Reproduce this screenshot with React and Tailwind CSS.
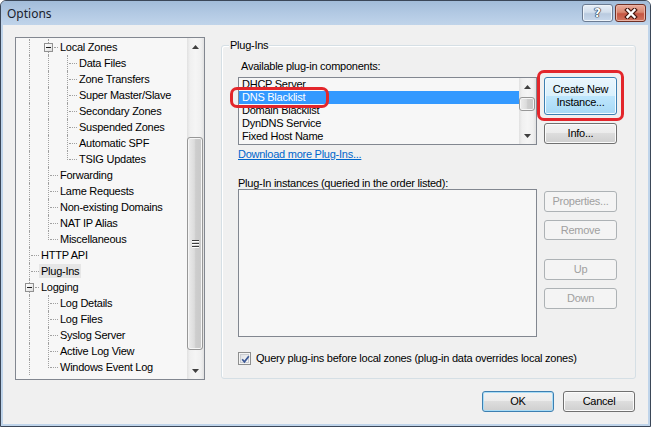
import React from 'react';
import clsx from 'clsx';

const treeRows = [
  { label: 'Local Zones', guides: ['v', 'box'] },
  { label: 'Data Files', guides: ['v', 'v', 'tee'] },
  { label: 'Zone Transfers', guides: ['v', 'v', 'tee'] },
  { label: 'Super Master/Slave', guides: ['v', 'v', 'tee'] },
  { label: 'Secondary Zones', guides: ['v', 'v', 'tee'] },
  { label: 'Suspended Zones', guides: ['v', 'v', 'tee'] },
  { label: 'Automatic SPF', guides: ['v', 'v', 'tee'] },
  { label: 'TSIG Updates', guides: ['v', 'v', 'end'] },
  { label: 'Forwarding', guides: ['v', 'tee'] },
  { label: 'Lame Requests', guides: ['v', 'tee'] },
  { label: 'Non-existing Domains', guides: ['v', 'tee'] },
  { label: 'NAT IP Alias', guides: ['v', 'tee'] },
  { label: 'Miscellaneous', guides: ['v', 'end'] },
  { label: 'HTTP API', guides: ['tee'] },
  { label: 'Plug-Ins', guides: ['tee'], selected: true },
  { label: 'Logging', guides: ['box'] },
  { label: 'Log Details', guides: ['v', 'tee'] },
  { label: 'Log Files', guides: ['v', 'tee'] },
  { label: 'Syslog Server', guides: ['v', 'tee'] },
  { label: 'Active Log View', guides: ['v', 'tee'] },
  { label: 'Windows Event Log', guides: ['v', 'end'] },
];

const plugins = ['DHCP Server', 'DNS Blacklist', 'Domain Blacklist', 'DynDNS Service', 'Fixed Host Name'];

const dot = 'absolute border-dotted border-[#a0a0a0]';

function Guide({ type }) {
  return (
    <div className="relative w-[19px] h-[16px] shrink-0">
      {(type === 'v' || type === 'tee' || type === 'box') && (
        <div className={clsx(dot, 'left-[10px] top-0 h-[16px] border-l')} />
      )}
      {type === 'end' && <div className={clsx(dot, 'left-[10px] top-0 h-[9px] border-l')} />}
      {(type === 'tee' || type === 'end') && (
        <div className={clsx(dot, 'left-[12px] top-[8px] w-[8px] border-t')} />
      )}
      {type === 'box' && (
        <>
          <div className={clsx(dot, 'left-[16px] top-[8px] w-[4px] border-t')} />
          <div className="absolute left-[6px] top-[4px] w-[9px] h-[9px] border border-[#919191] bg-[linear-gradient(135deg,#ffffff,#dedede)] flex items-center justify-center">
            <div className="w-[5px] h-px bg-[#1b1b1b]" />
          </div>
        </>
      )}
    </div>
  );
}

function Arrow({ down }) {
  return (
    <svg width="7" height="4" viewBox="0 0 7 4" className={down ? 'rotate-180' : ''}>
      <polygon points="0,4 3.5,0 7,4" fill="#3f3f3f" />
    </svg>
  );
}

function ScrollBar({ thumbClass, grip }) {
  return (
    <div className="w-[17px] h-full shrink-0 flex flex-col bg-[linear-gradient(to_right,#e1e1e1,#f0f0f0_18%,#f5f5f5_50%,#f0f0f0_82%,#e1e1e1)]">
      <div className="h-[17px] shrink-0 flex items-center justify-center">
        <Arrow />
      </div>
      <div className="flex-1 flex flex-col">
        <div
          className={clsx(
            'mr-[1px] rounded-[3px] border border-[#979797] shadow-[inset_0_0_0_1px_#f6f6f6] bg-[linear-gradient(to_right,#ececec,#dcdcdc_45%,#cdcdcd_55%,#c9c9c9)] flex items-center justify-center',
            thumbClass
          )}
        >
          {grip && (
            <div className="flex flex-col gap-[2px]">
              <div className="w-[7px] h-px bg-[#3d3d3d] shadow-[0_1px_0_#ffffff]" />
              <div className="w-[7px] h-px bg-[#3d3d3d] shadow-[0_1px_0_#ffffff]" />
              <div className="w-[7px] h-px bg-[#3d3d3d] shadow-[0_1px_0_#ffffff]" />
            </div>
          )}
        </div>
      </div>
      <div className="h-[17px] shrink-0 flex items-center justify-center">
        <Arrow down />
      </div>
    </div>
  );
}

const buttonStyles = {
  normal:
    'border-[#707070] bg-[linear-gradient(to_bottom,#f2f2f2,#ebebeb_50%,#dddddd_50%,#cfcfcf)] shadow-[inset_0_0_0_1px_#fbfbfb]',
  hot: 'border-[#3c7fb1] bg-[linear-gradient(to_bottom,#eaf6fd,#d9f0fc_50%,#bee6fd_50%,#a7d9f5)] shadow-[inset_0_0_0_1px_#f3fbff]',
  default:
    'border-[#3c7fb1] bg-[linear-gradient(to_bottom,#f2f2f2,#ebebeb_50%,#dddddd_50%,#cfcfcf)] shadow-[inset_0_0_0_1px_#a9dcf6]',
  disabled: 'border-[#adb2b5] bg-[#f4f4f4] text-[#a0a0a0]',
};

function Button({ children, variant = 'normal', className }) {
  return (
    <button
      type="button"
      className={clsx(
        'flex items-center justify-center border rounded-[3px] text-center',
        buttonStyles[variant],
        className
      )}
    >
      <span className="block">{children}</span>
    </button>
  );
}

function Tree() {
  return (
    <div className="w-[190px] h-[343px] shrink-0 border border-[#828790] bg-[#f7f7f7] flex">
      <div className="flex-1 pl-[3px] pt-[1px] overflow-hidden">
        {treeRows.map((row) => (
          <div key={row.label} className="flex h-[16px] items-start">
            {row.guides.map((g, i) => (
              <Guide key={i} type={g} />
            ))}
            <span
              className={clsx(
                'ml-[1px] px-[2px] whitespace-nowrap',
                row.selected ? 'mt-[1px] h-[14px] leading-[14px] bg-[#e6e6e6]' : 'h-[16px] leading-[16px]'
              )}
            >
              {row.label}
            </span>
          </div>
        ))}
      </div>
      <ScrollBar thumbClass="mt-[82px] h-[213px]" grip />
    </div>
  );
}

function Checkbox() {
  return (
    <div className="w-[13px] h-[13px] shrink-0 border border-[#8e8f8f] bg-[#f4f4f4] p-px">
      <div className="w-full h-full border border-[#c9ccd1] bg-[linear-gradient(135deg,#dfe1e4,#f7f7f7)]">
        <svg width="9" height="9" viewBox="0 0 9 9" className="block">
          <path d="M1.2 4.3 L3.4 6.8 L7.8 1.2" fill="none" stroke="#3a5796" strokeWidth="1.7" />
        </svg>
      </div>
    </div>
  );
}

export default function App() {
  return (
    <div className="w-[651px] h-[427px] font-['Liberation_Sans',Arial,sans-serif] text-[11px] tracking-[-0.25px] text-black">
      <div className="w-[651px] h-[427px] flex flex-col border border-[#3b4758] rounded-t-[6px] overflow-hidden bg-[#bfd4ea]">
        {/* Title bar */}
        <div className="h-[24px] shrink-0 flex items-start pl-[6px] pr-[4px] pt-[3px] bg-[linear-gradient(to_bottom,#a2bcd9,#b2c9e3_50%,#c0d4ea)]">
          <span className="mt-[2px] font-['Noto_Sans',sans-serif] text-[12px] leading-[16px] tracking-normal text-[#1a222d]">
            Options
          </span>
          <div className="ml-auto flex gap-[2px]">
            <div className="w-[31px] h-[18px] rounded-[3px] border border-[#6b7b92] bg-[linear-gradient(to_bottom,#e8eff8,#d2deec_45%,#b9cadf_55%,#c9d9ec)] shadow-[inset_0_0_0_1px_#eef4fa] flex items-center justify-center">
              <span className="font-['DejaVu_Sans',sans-serif] font-bold text-[12px] leading-[12px] text-white tracking-normal [text-shadow:0_0_1px_#1f2d44,0_0_1px_#1f2d44,0_0_1px_#1f2d44,0_0_1px_#1f2d44]">
                ?
              </span>
            </div>
            <div className="w-[31px] h-[18px] rounded-[3px] border border-[#6f3025] bg-[linear-gradient(to_bottom,#e9ab9c,#d98871_45%,#c55643_55%,#d27560)] shadow-[inset_0_0_0_1px_#eab3a5] flex items-center justify-center">
              <svg width="14" height="11" viewBox="0 0 14 11">
                <path d="M3.5 2 L10.5 9 M10.5 2 L3.5 9" stroke="#4a1a12" strokeWidth="4.6" strokeLinecap="square" />
                <path d="M3.5 2 L10.5 9 M10.5 2 L3.5 9" stroke="#ffffff" strokeWidth="2.4" strokeLinecap="square" />
              </svg>
            </div>
          </div>
        </div>

        {/* Client area */}
        <div className="flex-1 mx-[2px] mb-[2px] bg-[#f0f0f0] flex flex-col">
          <div className="flex items-start pl-[12px] pt-[12px]">
            <Tree />

            {/* Plug-Ins group */}
            <div className="relative ml-[16px] mt-[8px] w-[415px] h-[334px] border border-[#d5dfe5] rounded-[3px] shadow-[inset_1px_1px_0_#ffffff] pl-[16px] pt-[14px]">
              <span className="absolute left-[7px] top-[-7px] px-[1px] bg-[#f0f0f0] leading-[13px]">Plug-Ins</span>

              <div className="flex items-start">
                <div className="relative w-[299px]">
                  <div className="pl-[3px] h-[13px] leading-[13px]">Available plug-in components:</div>
                  <div className="mt-[4px] w-[299px] h-[68px] border border-[#828790] bg-[#f7f7f7] flex">
                    <div className="flex-1 overflow-hidden">
                      {plugins.map((p, i) => (
                        <div
                          key={p}
                          className={clsx(
                            'h-[13px] leading-[13px] pl-[3px] whitespace-nowrap',
                            i === 1 && 'bg-[#3399ff] text-white'
                          )}
                        >
                          {p}
                        </div>
                      ))}
                    </div>
                    <ScrollBar thumbClass="mt-[2px] h-[14px]" />
                  </div>
                  <div className="mt-[3px] h-[13px] leading-[13px] text-[#0066cc] underline">Download more Plug-Ins...</div>
                  <div className="absolute left-[-8px] top-[27px] w-[99px] h-[21px] border-[3px] border-[#e3262b] rounded-[7px]" />
                </div>
                <div className="relative ml-[7px] pt-[17px] flex flex-col">
                  <Button variant="hot" className="w-[73px] h-[38px] leading-[13px]">
                    Create New
                    <br />
                    Instance...
                  </Button>
                  <Button className="w-[73px] h-[21px] mt-[8px]">Info...</Button>
                  <div className="absolute left-[-7px] top-[10px] w-[87px] h-[51px] border-[3px] border-[#e3262b] rounded-[7px]" />
                </div>
              </div>

              <div className="mt-[16px] h-[12px] leading-[13px]">Plug-In instances (queried in the order listed):</div>
              <div className="flex items-start">
                <div className="w-[299px] h-[148px] border border-[#828790] bg-[#f7f7f7]" />
                <div className="ml-[7px] pt-[2px] flex flex-col">
                  <Button variant="disabled" className="w-[73px] h-[21px]">Properties...</Button>
                  <Button variant="disabled" className="w-[73px] h-[20px] mt-[8px]">Remove</Button>
                  <Button variant="disabled" className="w-[73px] h-[21px] mt-[19px]">Up</Button>
                  <Button variant="disabled" className="w-[73px] h-[21px] mt-[8px]">Down</Button>
                </div>
              </div>

              <div className="mt-[15px] h-[13px] flex items-center">
                <Checkbox />
                <span className="ml-[5px] leading-[13px] whitespace-nowrap">
                  Query plug-ins before local zones (plug-in data overrides local zones)
                </span>
              </div>
            </div>
          </div>

          {/* Dialog buttons */}
          <div className="mt-[11px] pr-[13px] flex justify-end gap-[9px]">
            <Button variant="default" className="w-[72px] h-[21px]">OK</Button>
            <Button className="w-[72px] h-[21px]">Cancel</Button>
          </div>
        </div>
      </div>
    </div>
  );
}
